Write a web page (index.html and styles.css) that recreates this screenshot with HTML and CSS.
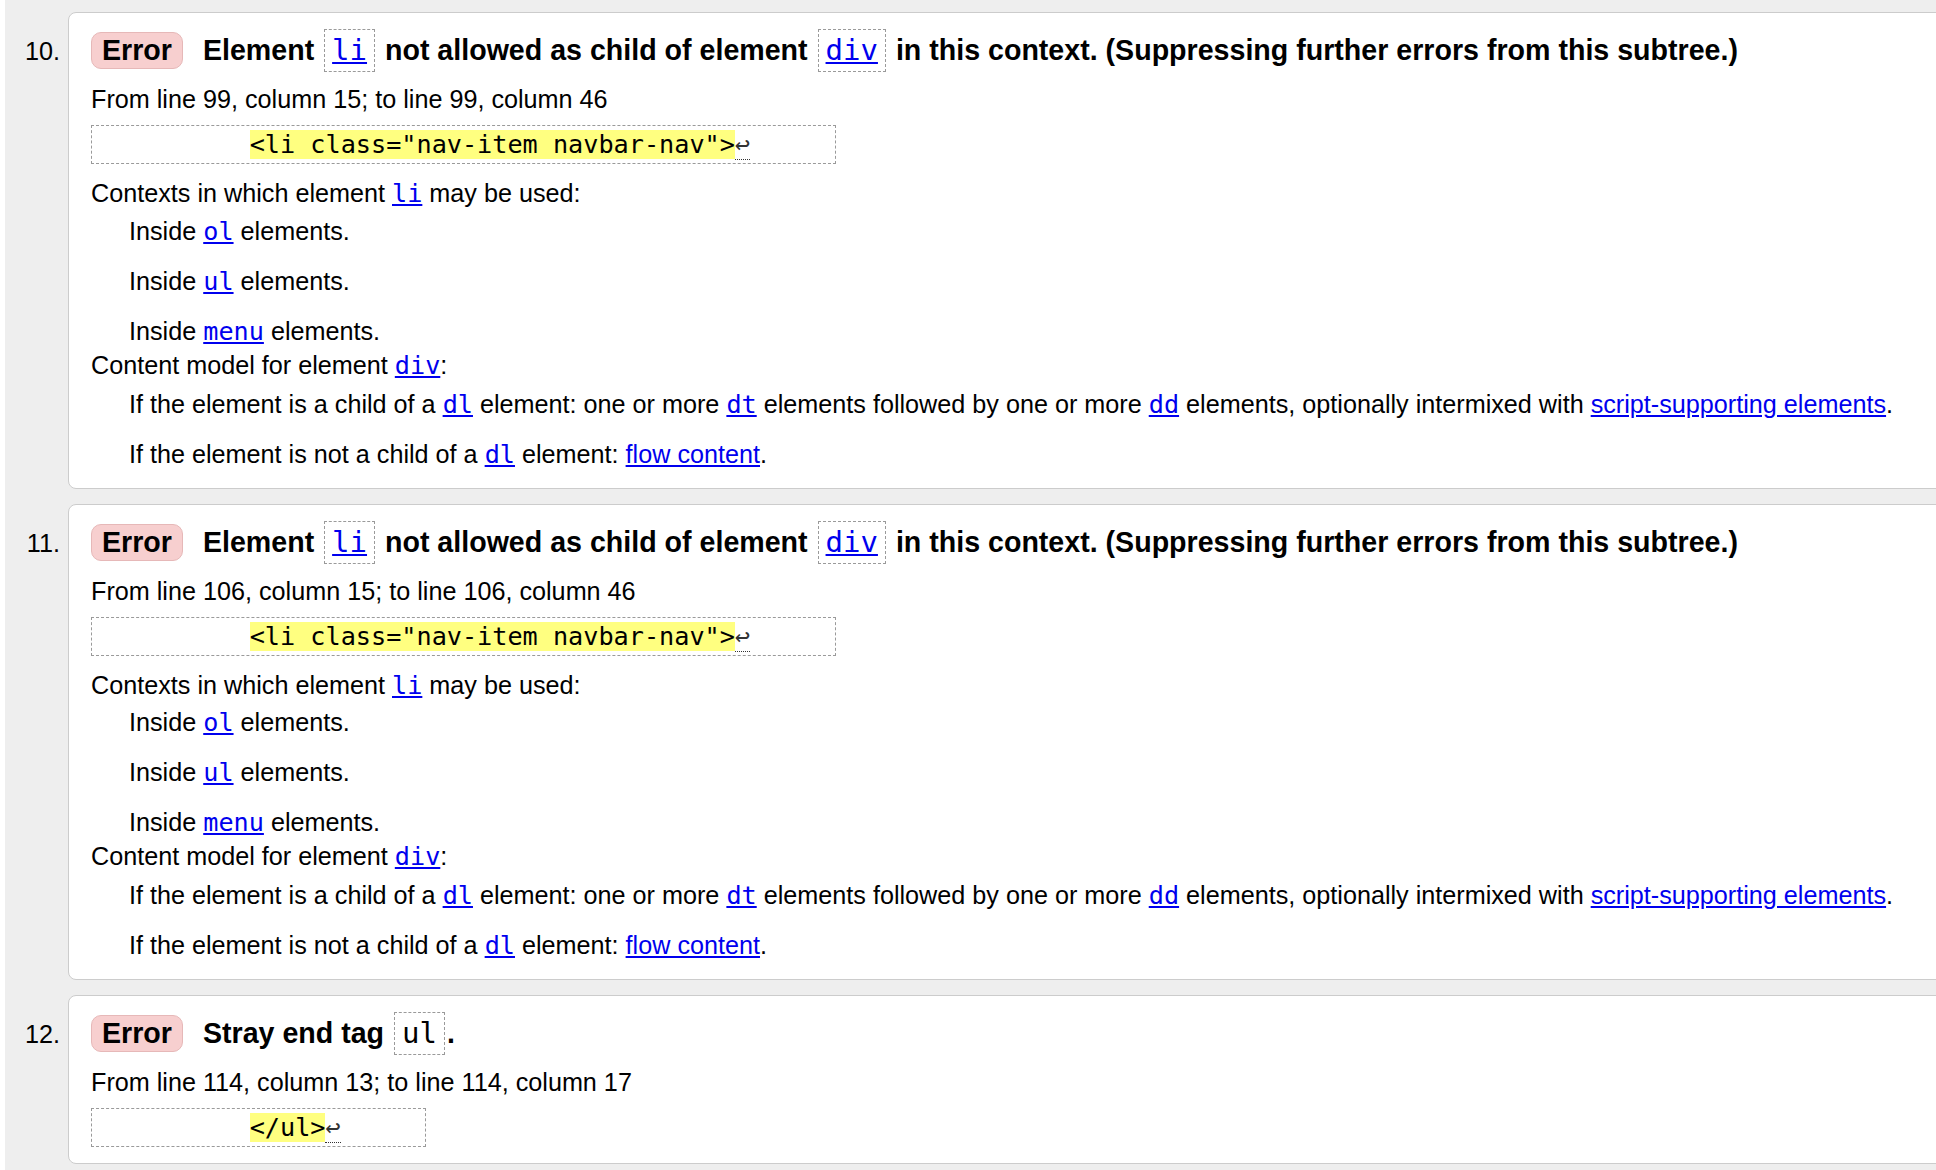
FILE: index.html
```html
<!DOCTYPE html>
<html lang="en">
<head>
<meta charset="utf-8">
<title>Validation results</title>
<link rel="stylesheet" href="styles.css">
</head>
<body>
<div class="page">
  <ol class="msgs">
    <li class="msg">
      <span class="num">10.</span>
      <div class="card">
        <p class="title"><span class="badge">Error</span><span class="title-text">Element <code class="cbox"><a href="#">li</a></code> not allowed as child of element <code class="cbox"><a href="#">div</a></code> in this context. (Suppressing further errors from this subtree.)</span></p>
        <p class="loc">From line 99, column 15; to line 99, column 46</p>
        <p class="extract"><code>          <b>&lt;li class="nav-item navbar-nav"&gt;</b><span class="lf">↩</span>     </code></p>
        <dl class="details">
          <dt class="first">Contexts in which element <a href="#"><code>li</code></a> may be used:</dt>
          <dd>Inside <a href="#"><code>ol</code></a> elements.</dd>
          <dd>Inside <a href="#"><code>ul</code></a> elements.</dd>
          <dd>Inside <a href="#"><code>menu</code></a> elements.</dd>
          <dt>Content model for element <a href="#"><code>div</code></a>:</dt>
          <dd>If the element is a child of a <a href="#"><code>dl</code></a> element: one or more <a href="#"><code>dt</code></a> elements followed by one or more <a href="#"><code>dd</code></a> elements, optionally intermixed with <a href="#">script-supporting elements</a>.</dd>
          <dd>If the element is not a child of a <a href="#"><code>dl</code></a> element: <a href="#">flow content</a>.</dd>
        </dl>
      </div>
    </li>
    <li class="msg">
      <span class="num">11.</span>
      <div class="card">
        <p class="title"><span class="badge">Error</span><span class="title-text">Element <code class="cbox"><a href="#">li</a></code> not allowed as child of element <code class="cbox"><a href="#">div</a></code> in this context. (Suppressing further errors from this subtree.)</span></p>
        <p class="loc">From line 106, column 15; to line 106, column 46</p>
        <p class="extract"><code>          <b>&lt;li class="nav-item navbar-nav"&gt;</b><span class="lf">↩</span>     </code></p>
        <dl class="details">
          <dt class="first">Contexts in which element <a href="#"><code>li</code></a> may be used:</dt>
          <dd>Inside <a href="#"><code>ol</code></a> elements.</dd>
          <dd>Inside <a href="#"><code>ul</code></a> elements.</dd>
          <dd>Inside <a href="#"><code>menu</code></a> elements.</dd>
          <dt>Content model for element <a href="#"><code>div</code></a>:</dt>
          <dd>If the element is a child of a <a href="#"><code>dl</code></a> element: one or more <a href="#"><code>dt</code></a> elements followed by one or more <a href="#"><code>dd</code></a> elements, optionally intermixed with <a href="#">script-supporting elements</a>.</dd>
          <dd>If the element is not a child of a <a href="#"><code>dl</code></a> element: <a href="#">flow content</a>.</dd>
        </dl>
      </div>
    </li>
    <li class="msg">
      <span class="num">12.</span>
      <div class="card card-short">
        <p class="title"><span class="badge">Error</span><span class="title-text">Stray end tag <code class="cbox">ul</code>.</span></p>
        <p class="loc">From line 114, column 13; to line 114, column 17</p>
        <p class="extract"><code>          <b>&lt;/ul&gt;</b><span class="lf">↩</span>     </code></p>
      </div>
    </li>
  </ol>
</div>
</body>
</html>
```
FILE: styles.css
```css
html, body {
  margin: 0;
  padding: 0;
}

body {
  background: #ffffff;
  overflow: hidden;
  font-family: "Liberation Sans", Arial, Helvetica, sans-serif;
  font-size: 25.2px;
  color: #000;
}

.page {
  margin-left: 5px;
  background: #eeeeee;
  min-height: 1170px;
  padding-top: 12px;
}

.msgs {
  list-style: none;
  margin: 0 -40px 0 0;
  padding: 0;
  display: flex;
  flex-direction: column;
  gap: 15px;
}

.msg {
  display: grid;
  grid-template-columns: 63px 1fr;
}

.num {
  text-align: right;
  padding-right: 8px;
  padding-top: 24px;
  line-height: 30px;
}

.card {
  background: #fff;
  border: 1px solid #cccccc;
  border-radius: 8px;
  padding: 16px 22px 18px 22px;
  display: flex;
  flex-direction: column;
  align-items: flex-start;
}

.card-short {
  padding-bottom: 16px;
}

p, dl, dt, dd {
  margin: 0;
}

a {
  color: #0000ee;
  text-decoration: underline;
}

code {
  font-family: "DejaVu Sans Mono", Menlo, monospace;
}

.title {
  font-size: 28.6px;
  font-weight: bold;
  line-height: normal;
  white-space: nowrap;
}

.badge {
  display: inline-block;
  background: #f7cfcf;
  border: 1px solid #e6b8b8;
  border-radius: 10px;
  padding: 1px 10px;
  line-height: 33px;
  margin-right: 20px;
}

.cbox {
  display: inline-block;
  font-weight: normal;
  font-size: 29px;
  border: 1px dashed #9a9a9a;
  padding: 3px 7px 4px;
  margin: 0 2px;
  line-height: normal;
}

.loc {
  margin-top: 12px;
  line-height: 30px;
}

.extract {
  margin-top: 11px;
  border: 1px dashed #9a9a9a;
  padding: 3px 9px 3px 6px;
  line-height: 30px;
  width: fit-content;
}

.extract code {
  white-space: pre;
  font-size: 25.2px;
}

.extract b {
  font-weight: normal;
  background: #ffff80;
}

.lf {
  color: #333;
  border-bottom: 1px dotted #333;
}

.details {
  margin-top: 14px;
  line-height: 30px;
}

.details dd + dt {
  margin-top: 3px;
}

.details dd {
  margin-left: 38px;
  margin-top: 19px;
}

.details dt + dd {
  margin-top: 8px;
}

.details dt.first + dd {
  margin-top: 6.5px;
}

.details code {
  font-size: 25.2px;
}
```
